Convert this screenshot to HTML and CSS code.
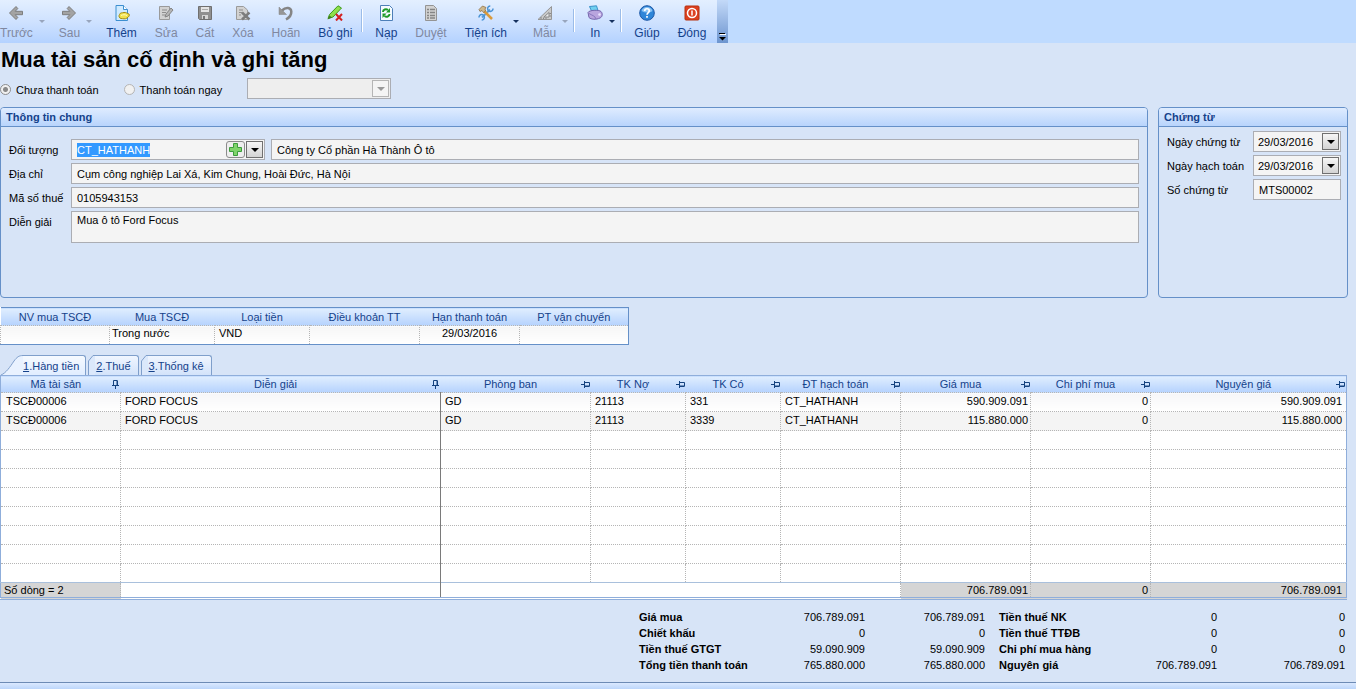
FILE: index.html
```html
<!DOCTYPE html>
<html lang="vi">
<head>
  <meta charset="UTF-8">
  <meta name="viewport" content="width=device-width, initial-scale=1.0">
  <title>Mua tài sản cố định và ghi tăng</title>
  <link rel="stylesheet" href="styles.css">
</head>
<body>
  <header class="topbar">
    <div class="toolbar">
      <button class="tool" disabled>
        <svg class="icon" viewBox="0 0 16 16"><path d="M8 1.5 1.5 8 8 14.5 9.8 12.4 7.2 9.7H14.5V6.3H7.2L9.8 3.6Z" fill="#a3a3a3" stroke="#7d7d7d"/></svg>
        <span>Trước</span>
      </button>
      <span class="drop off"></span>
      <button class="tool" disabled>
        <svg class="icon" viewBox="0 0 16 16"><path d="M8 1.5 14.5 8 8 14.5 6.2 12.4 8.8 9.7H1.5V6.3H8.8L6.2 3.6Z" fill="#a3a3a3" stroke="#7d7d7d"/></svg>
        <span>Sau</span>
      </button>
      <span class="drop off"></span>
      <button class="tool">
        <svg class="icon" viewBox="0 0 16 16"><path d="M2 .5H9.5L13.5 4.5V15.5H2Z" fill="#cfeaff" stroke="#3d8fd0"/><path d="M9.5 .5V4.5H13.5" fill="#fff" stroke="#3d8fd0"/><path d="M5.5 9.5C6 7.5 8 8 10 7.5 12 7 13 8.5 15 9 16 10.5 14.5 12 13 13 11 14.5 9 13.5 7 13.5 5 13 4.5 11 5.5 9.5Z" fill="#f3e24c" stroke="#a58c12"/><path d="M7 10.5C9 9.5 11 9.5 13 10.5" fill="none" stroke="#fffbc0"/></svg>
        <span>Thêm</span>
      </button>
      <button class="tool" disabled>
        <svg class="icon" viewBox="0 0 16 16"><path d="M1.5 1.5H11.5V14.5H1.5Z" fill="#d2d2d2" stroke="#9a9a9a"/><path d="M4 5H9M4 7.5H8M4 10H7" stroke="#8d8d8d"/><path d="M7 12 8 9 13 3 15 5 10 11Z" fill="#b5b5b5" stroke="#858585"/></svg>
        <span>Sửa</span>
      </button>
      <button class="tool" disabled>
        <svg class="icon" viewBox="0 0 16 16"><path d="M1.5 1.5H14.5V14.5H2.5L1.5 13.5Z" fill="#8f8f8f" stroke="#6f6f6f"/><path d="M4 2H12V7H4Z" fill="#e4e4e4"/><path d="M5 10H11V14H5Z" fill="#d5d5d5"/><path d="M6 11H8V14H6Z" fill="#777"/><path d="M5 4.5H11" stroke="#aaa"/></svg>
        <span>Cất</span>
      </button>
      <button class="tool" disabled>
        <svg class="icon" viewBox="0 0 16 16"><path d="M1.5 1.5H8.5L12.5 5V14.5H1.5Z" fill="#d2d2d2" stroke="#9a9a9a"/><path d="M4 5H8M4 7.5H7M4 10H6" stroke="#8d8d8d"/><path d="M7 7.5 14.5 14.5M14.5 7.5 7 14.5" stroke="#7c7c7c" stroke-width="2.5"/></svg>
        <span>Xóa</span>
      </button>
      <button class="tool" disabled>
        <svg class="icon" viewBox="0 0 16 16"><path d="M4 5.5C8 1.500 13 2.500 13.300 6.500 13.500 10 11.500 12.500 8 14.500" fill="none" stroke="#858585" stroke-width="2.5"/><path d="M1 2V9.500H8.500Z" fill="#969696" stroke="#858585" stroke-width=".5"/></svg>
        <span>Hoãn</span>
      </button>
      <button class="tool">
        <svg class="icon" viewBox="0 0 16 16"><path d="M1 13.5 2.5 9.5 11 .8 14.5 3 6 12Z" fill="#8fe04c" stroke="#3f9a1b"/><path d="M.5 14.5 2.5 10.5 5 12.5Z" fill="#3f7d20"/><path d="M9 9 15 15.5M15 9 9 15.5" stroke="#d32222" stroke-width="2"/></svg>
        <span>Bỏ ghi</span>
      </button>
      <span class="sep"></span>
      <button class="tool">
        <svg class="icon" viewBox="0 0 16 16"><path d="M2.5 .5H11.5L14.5 3.5V15.5H2.5Z" fill="#f4faff" stroke="#4d7fb8"/><path d="M5 7C5 4.5 8 3.5 10 5M11.5 9C11.5 11.5 8.5 12.5 6.5 11" fill="none" stroke="#1d9a28" stroke-width="2"/><path d="M12 3V7.5H8ZM4.5 13V8.5H8.5Z" fill="#1d9a28"/></svg>
        <span>Nạp</span>
      </button>
      <button class="tool" disabled>
        <svg class="icon" viewBox="0 0 16 16"><path d="M2.5 .5H10.5L13.5 3.5V15.5H2.5Z" fill="#d2d2d2" stroke="#949494"/><path d="M4 4.5H6M7 4.5H12M4 7.5H6M7 7.5H12M4 10.5H6M7 10.5H12M4 13H6M7 13H12" stroke="#858585" stroke-width="1.5"/></svg>
        <span>Duyệt</span>
      </button>
      <button class="tool">
        <svg class="icon" viewBox="0 0 16 16"><path d="M4 12.5 12 4.5" stroke="#5a9fdc" stroke-width="2"/><path d="M15 3.5A2.7 2.7 0 1 1 12.3 1M1 12.5A2.7 2.7 0 1 1 3.7 15" fill="none" stroke="#4a93d6" stroke-width="1.5"/><path d="M6 6 14 14" stroke="#d99a3c" stroke-width="2.5"/><path d="M1 4.5 4.5 1 8 2.5 7 4 7.5 6 5.5 7.5 4 5.5 2 6.5Z" fill="#cdb98f" stroke="#866437" stroke-width=".7"/></svg>
        <span>Tiện ích</span>
      </button>
      <span class="drop"></span>
      <button class="tool" disabled>
        <svg class="icon" viewBox="0 0 16 16"><path d="M1 14.5 14.5 1.5V14.5Z" fill="#c9c9c9" stroke="#969696"/><path d="M7 12 12 7.5V12Z" fill="#eee" stroke="#888"/><path d="M4 14V12M6.5 14V12.5M9 14V12.5M14 11H12.5M14 8.5H12.5" stroke="#777" stroke-width=".8"/></svg>
        <span>Mẫu</span>
      </button>
      <span class="drop off"></span>
      <span class="sep"></span>
      <button class="tool">
        <svg class="icon" viewBox="0 0 16 16"><path d="M2.5 1.5 9.5 .8 11 5.5 5 7Z" fill="#6fd0f0" stroke="#3a91c8"/><path d="M1 7.5C2 5 12 4.5 14 6.5 16 8.5 15.5 12 13 13 9 15 4 14.5 2 12.5Z" fill="#b9a5de" stroke="#7465ac"/><path d="M2 8.5C5 10.5 8 10.5 9 14" fill="none" stroke="#8676bd"/><circle cx="12.5" cy="9.5" r="1.3" fill="#e9e2ff"/></svg>
        <span>In</span>
      </button>
      <span class="drop"></span>
      <span class="sep"></span>
      <button class="tool">
        <svg class="icon" viewBox="0 0 16 16"><circle cx="8" cy="8" r="7.3" fill="#2f86d8" stroke="#1d58a6"/><path d="M2.5 6A5.8 5.8 0 0 1 13.5 6C10 8 6 8 2.5 6Z" fill="#8cc4f5"/><path d="M5.7 6C5.7 3 10.3 3 10.3 6 10.3 7.5 8 7.7 8 9.8M8 11V12.8" fill="none" stroke="#fff" stroke-width="1.7"/></svg>
        <span>Giúp</span>
      </button>
      <button class="tool">
        <svg class="icon" viewBox="0 0 16 16"><rect x="1" y="1" width="14" height="14" rx="1" fill="#dc4020" stroke="#b5300f"/><circle cx="8" cy="8" r="4.5" fill="none" stroke="#fff" stroke-width="1.5"/><path d="M8 5.5V10.5" stroke="#fff" stroke-width="1.5"/></svg>
        <span>Đóng</span>
      </button>
      <button class="overflow" aria-label="Tùy chọn thanh công cụ">
        <svg width="7" height="8" viewBox="0 0 7 8"><path d="M1 1.5H7" stroke="#fff"/><path d="M0 .5H6" stroke="#000"/><path d="M0 4H7L3.5 7.5Z" fill="#000"/></svg>
      </button>
    </div>
  </header>

  <h1>Mua tài sản cố định và ghi tăng</h1>

  <div class="payment">
    <label class="radio"><input type="radio" name="thanh-toan" checked disabled>Chưa thanh toán</label>
    <label class="radio"><input type="radio" name="thanh-toan" disabled>Thanh toán ngay</label>
    <div class="combo method">
      <select aria-label="Phương thức thanh toán" disabled><option></option></select>
      <span class="arrow off"></span>
    </div>
  </div>

  <main>
    <div class="panels">
      <section class="panel general">
        <h2>Thông tin chung</h2>
        <div class="form">
          <label for="doi-tuong">Đối tượng</label>
          <div class="object">
            <div class="combo">
              <input id="doi-tuong" type="text" value="CT_HATHANH">
              <button class="add" aria-label="Thêm đối tượng">
                <svg width="13" height="13" viewBox="0 0 13 13"><path d="M4.5 .5H8.5V4.5H12.5V8.5H8.5V12.5H4.5V8.5H.5V4.5H4.5Z" fill="#7fd46a" stroke="#3c9c3c"/></svg>
              </button>
              <button class="arrow" aria-label="Chọn đối tượng"></button>
            </div>
            <input class="field" type="text" aria-label="Tên đối tượng" value="Công ty Cổ phần Hà Thành Ô tô">
          </div>
          <label for="dia-chi">Địa chỉ</label>
          <input class="field" id="dia-chi" type="text" value="Cụm công nghiệp Lai Xá, Kim Chung, Hoài Đức, Hà Nội">
          <label for="ma-so-thue">Mã số thuế</label>
          <input class="field" id="ma-so-thue" type="text" value="0105943153">
          <label for="dien-giai">Diễn giải</label>
          <textarea class="field" id="dien-giai">Mua ô tô Ford Focus</textarea>
        </div>
      </section>

      <section class="panel voucher">
        <h2>Chứng từ</h2>
        <div class="form">
          <label for="ngay-ct">Ngày chứng từ</label>
          <div class="combo">
            <input id="ngay-ct" type="text" value="29/03/2016">
            <button class="arrow" aria-label="Chọn ngày chứng từ"></button>
          </div>
          <label for="ngay-ht">Ngày hạch toán</label>
          <div class="combo">
            <input id="ngay-ht" type="text" value="29/03/2016">
            <button class="arrow" aria-label="Chọn ngày hạch toán"></button>
          </div>
          <label for="so-ct">Số chứng từ</label>
          <input class="field" id="so-ct" type="text" value="MTS00002">
        </div>
      </section>
    </div>

    <table class="grid terms">
      <colgroup><col class="c109"><col class="c105"><col class="c95"><col class="c110"><col class="c100"><col class="c109"></colgroup>
      <thead>
        <tr><th>NV mua TSCĐ</th><th>Mua TSCĐ</th><th>Loại tiền</th><th>Điều khoản TT</th><th>Hạn thanh toán</th><th>PT vận chuyển</th></tr>
      </thead>
      <tbody>
        <tr><td></td><td>Trong nước</td><td>VND</td><td></td><td class="mid">29/03/2016</td><td></td></tr>
      </tbody>
    </table>

    <div class="tabs" role="tablist">
      <button class="tab active" role="tab" aria-selected="true"><svg width="22" height="20" viewBox="0 0 22 20"><path d="M0 20C5 18 9 12 13 6 16 2 18 .5 22 .5V20Z" fill="#e9f2ff"/><path d="M0 20C5 18 9 12 13 6 16 2 18 .5 22 .5" fill="none" stroke="#7f9fcb"/></svg><span><u>1</u>.Hàng tiền</span></button>
      <button class="tab" role="tab" aria-selected="false"><svg width="7" height="20" viewBox="0 0 7 20"><path d="M.5 20V6L5 .5H7V20Z" fill="#dbe8fb"/><path d="M.5 20V6L5 .5H7" fill="none" stroke="#7f9fcb"/></svg><span><u>2</u>.Thuế</span></button>
      <button class="tab" role="tab" aria-selected="false"><svg width="7" height="20" viewBox="0 0 7 20"><path d="M.5 20V6L5 .5H7V20Z" fill="#dbe8fb"/><path d="M.5 20V6L5 .5H7" fill="none" stroke="#7f9fcb"/></svg><span><u>3</u>.Thống kê</span></button>
    </div>

    <table class="grid items">
      <colgroup><col class="c120"><col class="c320"><col class="c150"><col class="c95"><col class="c95"><col class="c120"><col class="c130"><col class="c120"><col></colgroup>
      <thead>
        <tr>
          <th class="pinned">Mã tài sản</th>
          <th class="pinned">Diễn giải</th>
          <th>Phòng ban</th>
          <th>TK Nợ</th>
          <th>TK Có</th>
          <th>ĐT hạch toán</th>
          <th>Giá mua</th>
          <th>Chi phí mua</th>
          <th>Nguyên giá</th>
        </tr>
      </thead>
      <tbody id="rows">
        <tr><td>TSCĐ00006</td><td>FORD FOCUS</td><td>GD</td><td>21113</td><td>331</td><td>CT_HATHANH</td><td>590.909.091</td><td>0</td><td>590.909.091</td></tr>
        <tr class="alt"><td>TSCĐ00006</td><td>FORD FOCUS</td><td>GD</td><td>21113</td><td>3339</td><td>CT_HATHANH</td><td>115.880.000</td><td>0</td><td>115.880.000</td></tr>
      </tbody>
      <tfoot>
        <tr><td class="sum">Số dòng = 2</td><td></td><td colspan="4"></td><td class="sum">706.789.091</td><td class="sum">0</td><td class="sum">706.789.091</td></tr>
      </tfoot>
    </table>

    <div class="totals">
      <table>
        <tr><th>Giá mua</th><td>706.789.091</td><td>706.789.091</td></tr>
        <tr><th>Chiết khấu</th><td>0</td><td>0</td></tr>
        <tr><th>Tiền thuế GTGT</th><td>59.090.909</td><td>59.090.909</td></tr>
        <tr><th>Tổng tiền thanh toán</th><td>765.880.000</td><td>765.880.000</td></tr>
      </table>
      <table class="costs">
        <tr><th>Tiền thuế NK</th><td>0</td><td>0</td></tr>
        <tr><th>Tiền thuế TTĐB</th><td>0</td><td>0</td></tr>
        <tr><th>Chi phí mua hàng</th><td>0</td><td>0</td></tr>
        <tr><th>Nguyên giá</th><td>706.789.091</td><td>706.789.091</td></tr>
      </table>
    </div>
  </main>
  <footer class="statusbar"></footer>

  <script>
    // pin icon in every column header
    const pin = '<svg class="pin" viewBox="0 0 9 9"><path d="M0 4.5H3M3.5 1V8M3.5 2.5H8.5V6H3.5M3.5 6.5H8.5" fill="none" stroke="#14427f"/></svg>';
    document.querySelectorAll('.items th').forEach(th => {
      th.innerHTML = '<div class="head"><span>' + th.textContent + '</span>' + pin + '</div>';
    });

    // fill the rest of the grid with empty rows
    const rows = document.getElementById('rows');
    for (let i = 0; i < 8; i++) {
      const tr = rows.insertRow();
      for (let c = 0; c < 9; c++) tr.insertCell();
    }

    document.getElementById('doi-tuong').select();
  </script>
</body>
</html>
```
FILE: styles.css
```css
* {
  box-sizing: border-box;
}

body {
  margin: 0;
  min-height: 100vh;
  display: flex;
  flex-direction: column;
  background: #d7e4f7;
  color: #000;
  font: 11px/14px "Liberation Sans", Arial, sans-serif;
}

button, input, select, textarea {
  margin: 0;
  padding: 0;
  border: 0;
  border-radius: 0;
  background: none;
  color: inherit;
  font: inherit;
  outline: none;
}

/* toolbar */
.topbar {
  height: 43px;
  background: #bfdbff;
}

.toolbar {
  display: flex;
  width: max-content;
  height: 43px;
  background: linear-gradient(#e3efff, #cfe2ff 50%, #b4d2ff);
}

.tool {
  display: flex;
  flex-direction: column;
  align-items: center;
  gap: 4px;
  padding: 5px 9px 0;
  color: #15428b;
  font-size: 12px;
  line-height: 16px;
}

.tool:first-child {
  padding-left: 0;
}

.tool:disabled {
  color: #8088a0;
}

.icon {
  width: 16px;
  height: 16px;
}

.drop {
  width: 8px;
  margin: 0 3px 0 -3px;
  padding-top: 20px;
}

.drop::before {
  content: "";
  display: block;
  width: 0;
  border: 3px solid transparent;
  border-top-color: #15305f;
  border-bottom: 0;
}

.drop.off::before {
  border-top-color: #98a5bd;
}

.sep {
  width: 2px;
  height: 23px;
  margin: 9px 3px 0 0;
  background: #9bbce8;
  border-right: 1px solid #fff;
}

.overflow {
  display: flex;
  align-items: flex-end;
  justify-content: center;
  width: 11px;
  margin-left: 2px;
  padding-bottom: 2px;
  background: linear-gradient(#c3d9f8, #6d95cf);
}

h1 {
  margin: 4px 0 0;
  padding-left: 1px;
  font-size: 22px;
  line-height: 26px;
}

/* payment line */
.payment {
  display: flex;
  align-items: center;
  gap: 25px;
  height: 21px;
  margin: 5px 0 8px;
}

.radio {
  display: flex;
  align-items: center;
  gap: 5px;
  padding-top: 2px;
}

.radio input {
  appearance: none;
  width: 11px;
  height: 11px;
  border: 1px solid #b5b5b5;
  border-radius: 50%;
  background: #f1f1f1;
}

.radio input:checked {
  border-color: #8d8d8d;
  background: radial-gradient(#8a8a8a 2px, #f1f1f1 3px);
}

.combo {
  display: flex;
  align-items: center;
  height: 21px;
  padding: 0 1px 0 5px;
  border: 1px solid #abadb3;
  background: #f4f4f4;
}

.combo input, .combo select {
  flex: 1;
  min-width: 0;
  padding-top: 1px;
  appearance: none;
  line-height: 14px;
}

.combo input::selection {
  background: #3399ff;
  color: #fff;
}

.method {
  width: 144px;
  background: #eee;
}

.arrow {
  display: flex;
  align-items: center;
  justify-content: center;
  width: 17px;
  height: 17px;
  border: 1px solid #707070;
  background: linear-gradient(#f6f6f6, #d4d4d4);
}

.arrow::before {
  content: "";
  border: 4px solid transparent;
  border-top-color: #000;
  border-bottom: 0;
}

.arrow.off {
  border-color: #b5b5b5;
  background: #f4f4f4;
}

.arrow.off::before {
  border-top-color: #999;
}

.add {
  display: flex;
  align-items: center;
  justify-content: center;
  width: 19px;
  height: 17px;
  margin-right: 1px;
  border: 1px solid #8c8c8c;
  border-radius: 3px;
  background: #eee;
}

/* panels */
main {
  margin-right: 8px;
}

.panels {
  display: flex;
  gap: 10px;
  height: 191px;
}

.panel {
  border: 1px solid #6590c8;
  border-radius: 4px;
}

.general {
  flex: 1;
}

.voucher {
  width: 190px;
}

h2 {
  margin: 0;
  padding: 0 5px;
  height: 19px;
  border-bottom: 1px solid #6590c8;
  border-radius: 3px 3px 0 0;
  background: linear-gradient(#dfecff, #b8d4fc);
  color: #15428b;
  font-size: 11px;
  line-height: 18px;
}

.form {
  display: grid;
  grid-template-columns: 59px minmax(0, 1fr);
  gap: 3px;
  padding: 12px 8px;
}

.form label {
  height: 21px;
  line-height: 23px;
}

.voucher .form {
  grid-template-columns: 83px minmax(0, 1fr);
  padding: 4px 6px 0 8px;
}

.voucher .combo {
  padding-left: 4px;
}

.object {
  display: grid;
  grid-template-columns: 194px 1fr;
  gap: 6px;
}

.field {
  width: 100%;
  height: 21px;
  padding: 1px 5px 0;
  border: 1px solid #abadb3;
  background: #f4f4f4;
}

textarea.field {
  display: block;
  height: 32px;
  line-height: 14px;
  resize: none;
}

/* grids */
.grid {
  border-collapse: collapse;
  table-layout: fixed;
  background: #fff;
}

.grid th {
  height: 18px;
  padding: 0;
  background: linear-gradient(#e0eeff, #b5d2fd);
  color: #15428b;
  font-weight: normal;
}

.grid td {
  height: 19px;
  padding: 0 2px 3px 4px;
  border: 1px dotted #b5b5b5;
  line-height: 14px;
}

.terms {
  width: 629px;
  margin-top: 9px;
  border: 1px solid #6590c8;
  border-left: 0;
}

.terms td {
  padding: 0 4px 4px;
  background: linear-gradient(#f6f6f6, #fff);
}

.terms td:nth-child(2) {
  padding-left: 2px;
}

.terms .mid {
  text-align: center;
}

.c95 { width: 95px; }
.c100 { width: 100px; }
.c105 { width: 105px; }
.c109 { width: 109px; }
.c110 { width: 110px; }
.c120 { width: 120px; }
.c130 { width: 130px; }
.c150 { width: 150px; }
.c320 { width: 320px; }

.tabs {
  display: flex;
  gap: 2px;
  margin: 10px 0 0 1px;
}

.tab {
  display: flex;
  height: 20px;
  color: #15428b;
}

.tab span {
  height: 20px;
  padding: 0 7px 0 1px;
  border: 1px solid #7f9fcb;
  border-width: 1px 1px 0 0;
  border-radius: 0 3px 0 0;
  background: linear-gradient(#f0f6ff, #d3e3fa);
  line-height: 20px;
}

.tab.active span {
  padding: 0 6px 0 0;
  background: linear-gradient(#f6faff, #e0edff);
}

.items {
  width: calc(100% - 1px);
  border: 1px solid #8faedb;
  border-bottom: 3px double #8faedb;
}

.items th {
  height: 17px;
}

.head {
  display: flex;
  align-items: center;
}

.head span {
  flex: 1;
}

.pin {
  width: 9px;
  height: 9px;
  margin-right: 1px;
}

.pinned .pin {
  transform: rotate(-90deg);
}

.items tbody tr:first-child td {
  background: linear-gradient(#f6f6f8, #fff);
}

.items tbody .alt td {
  background: #f4f4f4;
}

.items tbody td:nth-child(n+7), .items tfoot td:nth-child(n+4), .totals td {
  text-align: right;
}

.items td:first-child {
  padding-left: 5px;
}

.items td:last-child {
  padding-right: 4px;
}

.items td:nth-child(2) {
  border-right: 1px solid #7a7a7a;
}

.items tfoot td {
  height: 16px;
  padding-bottom: 0;
  border-top: 1px solid #a9c0dc;
}

.items .sum {
  background: #d5d5d5;
}

.items .sum:first-child {
  padding-left: 3px;
}

/* totals */
.totals {
  display: flex;
  justify-content: flex-end;
  align-items: flex-start;
  gap: 14px;
  padding: 9px 3px 9px 0;
}

.totals table {
  width: 346px;
  border-collapse: collapse;
  white-space: nowrap;
}

.totals th, .totals td {
  height: 16px;
  padding: 0;
}

.totals th {
  width: 120px;
  text-align: left;
}

.totals td:last-child {
  width: 120px;
}

.totals .costs td:last-child {
  width: 128px;
}

.statusbar {
  flex: 1;
  min-height: 6px;
  border-top: 1px solid #6d8bb5;
  background: linear-gradient(#dbe9ff, #bcd6fb);
}
```
